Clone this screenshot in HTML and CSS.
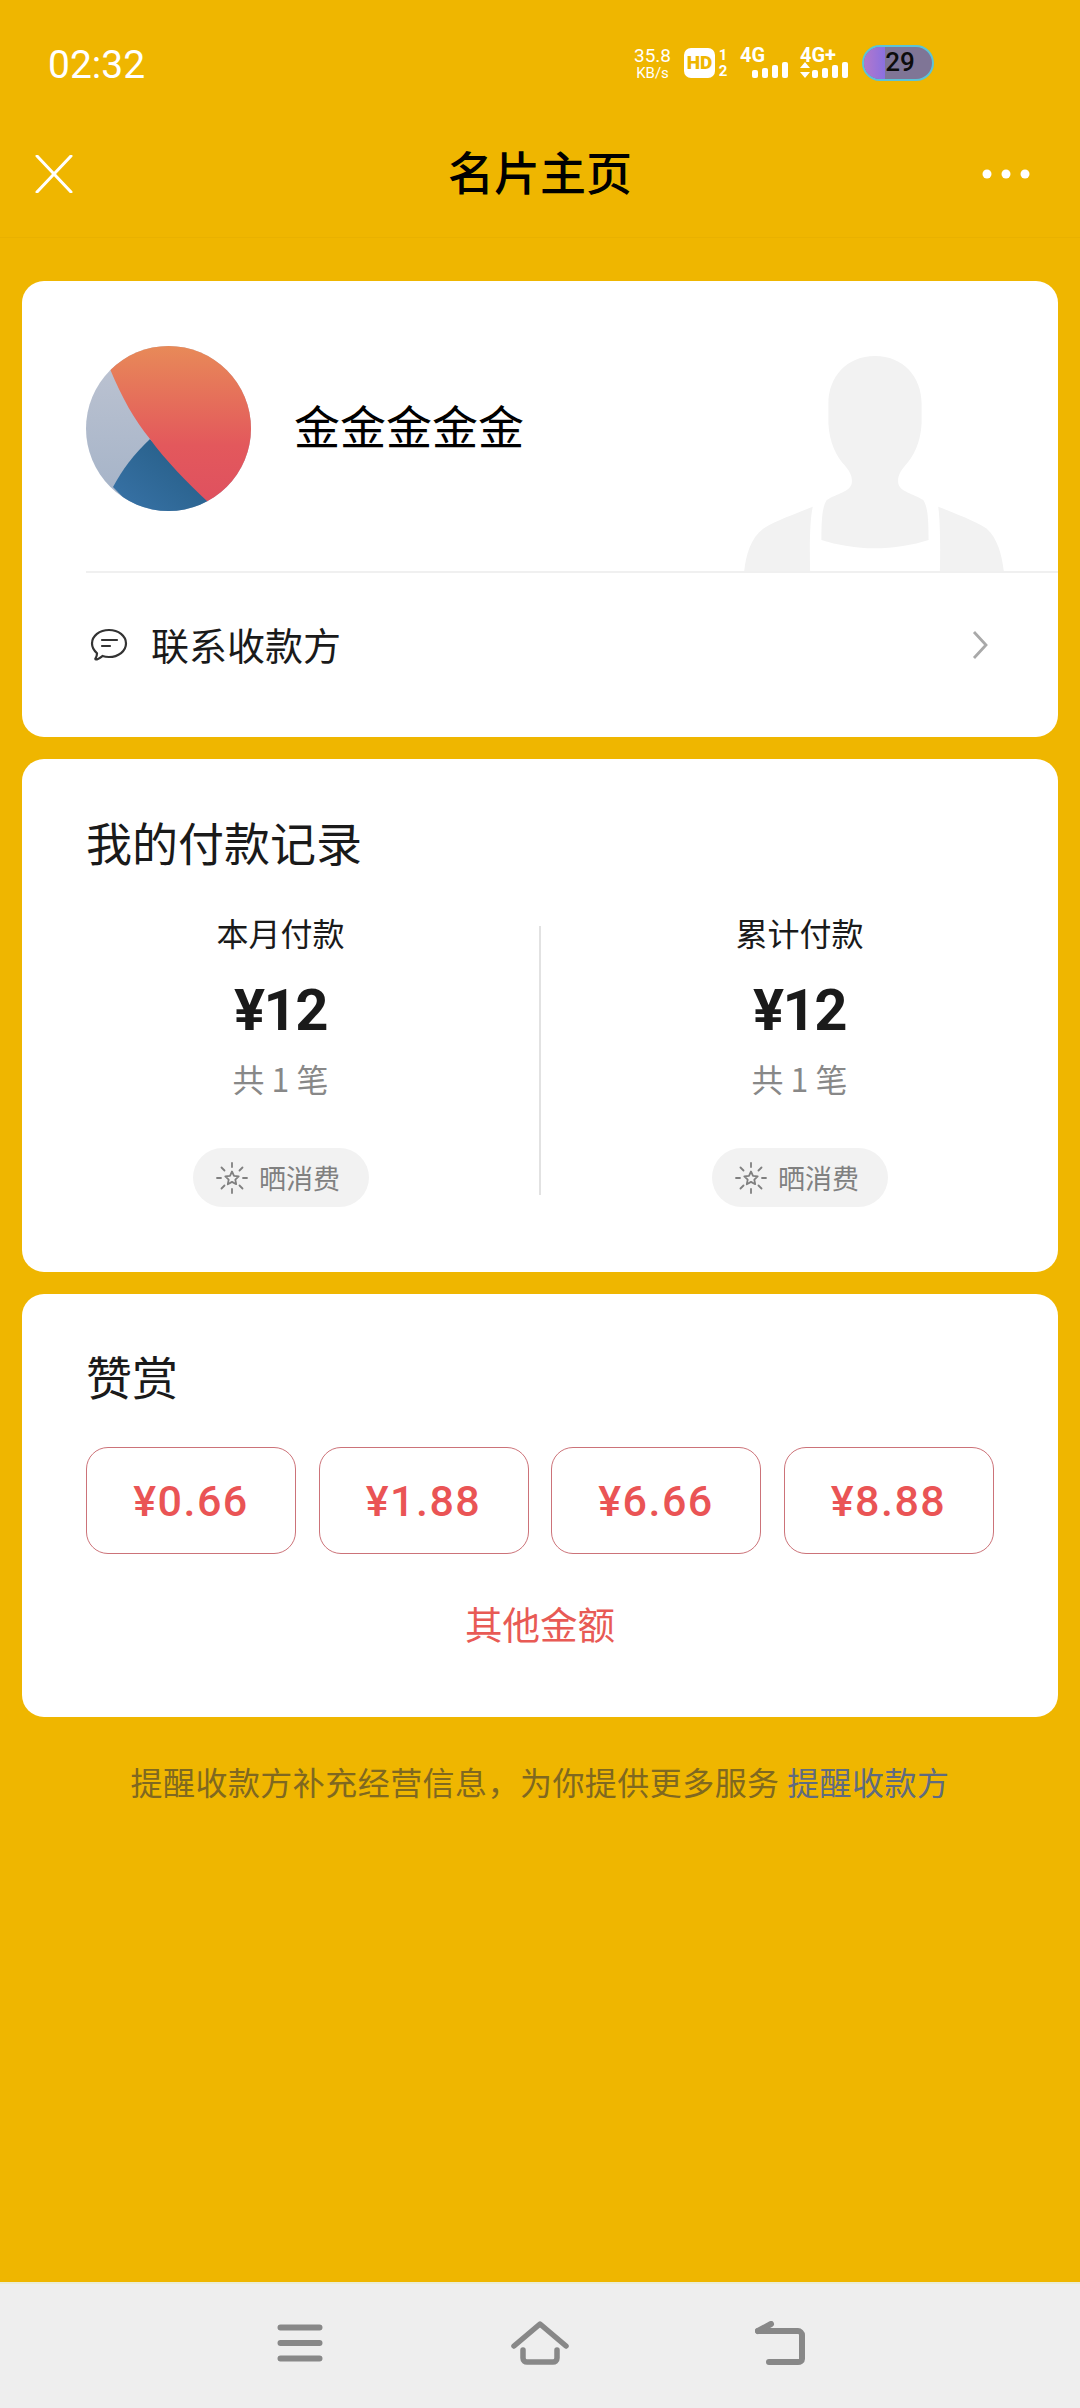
FILE: index.html
```html
<!DOCTYPE html>
<html lang="zh">
<head>
<meta charset="utf-8">
<title>名片主页</title>
<link rel="stylesheet" href="styles.css">
</head>
<body>
<div class="page">
  <header class="status">
    <span class="time">02:32</span>
    <div class="status-icons">
      <div class="speed"><span class="speed-num">35.8</span><span class="speed-unit">KB/s</span></div>
      <div class="hd">HD</div>
      <div class="sim"><span>1</span><span>2</span></div>
      <div class="net net-a">
        <span class="net-label">4G</span>
        <svg class="bars" width="36" height="16" viewBox="0 0 36 16"><g fill="#fff"><rect x="0" y="8" width="6" height="8" rx="2"/><rect x="10" y="6" width="6" height="10" rx="2"/><rect x="20" y="3" width="6" height="13" rx="2"/><rect x="30" y="0" width="6" height="16" rx="2"/></g></svg>
      </div>
      <div class="net net-b">
        <span class="net-label">4G+</span>
        <svg class="bars" width="48" height="16" viewBox="0 0 48 16"><g fill="#fff"><path d="M5 0l5 6H0zM5 16L0 10h10z"/><rect x="12" y="8" width="6" height="8" rx="2"/><rect x="22" y="6" width="6" height="10" rx="2"/><rect x="32" y="3" width="6" height="13" rx="2"/><rect x="42" y="0" width="6" height="16" rx="2"/></g></svg>
      </div>
      <div class="battery"><span class="battery-fill"></span><span class="battery-num">29</span></div>
    </div>
  </header>

  <nav class="navbar">
    <svg class="nav-close" width="38" height="38" viewBox="0 0 38 38"><path d="M2 1l34 36M36 1L2 37" stroke="#fff" stroke-width="3" fill="none" stroke-linecap="round"/></svg>
    <h1 class="nav-title">名片主页</h1>
    <svg class="nav-more" width="48" height="12" viewBox="0 0 48 12"><g fill="#fff"><circle cx="5" cy="6" r="4.5"/><circle cx="24" cy="6" r="4.5"/><circle cx="43" cy="6" r="4.5"/></g></svg>
  </nav>

  <main class="content">
    <section class="card card-profile">
      <div class="profile-head">
        <svg class="silhouette" width="260" height="215" viewBox="192 82 780 646">
          <path fill="#f2f2f2" d="M585 82C500 82 445 145 445 225V285C448 345 470 385 495 412C510 430 518 445 515 465C510 490 470 495 440 515C428 535 424 560 424 635C470 650 530 660 585 660C640 660 700 650 746 635C746 560 742 535 730 515C700 495 660 490 655 465C652 445 660 430 675 412C700 385 722 345 725 285V225C725 145 670 82 585 82Z"/>
          <path fill="#f2f2f2" d="M398 535C390 570 388 640 390 728H192C198 680 210 630 250 600C290 575 350 555 398 535ZM775 535C780 570 782 640 780 728H972C966 680 954 630 920 600C880 575 825 555 775 535Z"/>
        </svg>
        <svg class="avatar" width="165" height="165" viewBox="0 0 165 165">
          <defs>
            <clipPath id="av"><circle cx="82.5" cy="82.5" r="82.5"/></clipPath>
            <linearGradient id="av-gray" x1="0" y1="0" x2="0" y2="1"><stop offset="0" stop-color="#bec4d2"/><stop offset="1" stop-color="#a3b2c7"/></linearGradient>
            <linearGradient id="av-blue" x1="0" y1="1" x2="1" y2="0"><stop offset="0" stop-color="#3a75ab"/><stop offset="1" stop-color="#235a80"/></linearGradient>
            <linearGradient id="av-red" x1="0" y1="0" x2="0" y2="1"><stop offset="0" stop-color="#e88c58"/><stop offset="0.6" stop-color="#e3585c"/><stop offset="1" stop-color="#de4f60"/></linearGradient>
          </defs>
          <g clip-path="url(#av)">
            <rect width="165" height="165" fill="url(#av-gray)"/>
            <path d="M64 93C48 108 36 124 27 141L60 175 125 165 122 155z" fill="url(#av-blue)"/>
            <path d="M24 23C36 52 48 73 64 93C80 115 100 135 122 156L170 170V-5H20z" fill="url(#av-red)"/>
          </g>
        </svg>
        <span class="profile-name">金金金金金</span>
      </div>
      <div class="contact-row">
        <svg class="contact-icon" width="38" height="34" viewBox="0 0 38 34"><path d="M19 2c9.500 0 17 6 17 13.500S28.500 29 19 29c-2.500 0-4.500-.3-6.500-1-2 1.500-4.500 3.500-6.500 3.500-.8 0-.8-.8-.4-1.300.8-1.200 1.400-3 1.400-5C4 22.500 2 19 2 15.500 2 8 9.500 2 19 2z" fill="none" stroke="#333" stroke-width="2.200"/><path d="M12 12h15M12 18h8" stroke="#333" stroke-width="2.200" stroke-linecap="round"/></svg>
        <span class="contact-text">联系收款方</span>
        <svg class="chevron" width="16" height="30" viewBox="0 0 16 30"><path d="M2 2l12 13L2 28" fill="none" stroke="#a9a9a9" stroke-width="2.800"/></svg>
      </div>
    </section>

    <section class="card card-records">
      <h2 class="card-title">我的付款记录</h2>
      <div class="stats">
        <div class="stat">
          <div class="stat-label">本月付款</div>
          <div class="stat-amount">¥12</div>
          <div class="stat-count">共 1 笔</div>
          <div class="share-pill">
            <svg class="sun" width="32" height="32" viewBox="0 0 32 32"><g fill="none" stroke="#808080" stroke-width="1.800" stroke-linecap="round" stroke-linejoin="round"><path d="M16 9.500l2 4.300 4.700.6-3.400 3.200.9 4.600-4.200-2.300-4.200 2.300.9-4.600-3.400-3.200 4.700-.6z"/><path d="M16 1v4M16 27v4M1 16h4M27 16h4M5.500 5.500l3 3M23.500 23.500l3 3M26.500 5.500l-3 3M8.500 23.500l-3 3"/></g></svg>
            <span>晒消费</span>
          </div>
        </div>
        <div class="stats-divider"></div>
        <div class="stat">
          <div class="stat-label">累计付款</div>
          <div class="stat-amount">¥12</div>
          <div class="stat-count">共 1 笔</div>
          <div class="share-pill">
            <svg class="sun" width="32" height="32" viewBox="0 0 32 32"><g fill="none" stroke="#808080" stroke-width="1.800" stroke-linecap="round" stroke-linejoin="round"><path d="M16 9.500l2 4.300 4.700.6-3.400 3.200.9 4.600-4.200-2.300-4.200 2.300.9-4.600-3.400-3.200 4.700-.6z"/><path d="M16 1v4M16 27v4M1 16h4M27 16h4M5.500 5.500l3 3M23.500 23.500l3 3M26.500 5.500l-3 3M8.500 23.500l-3 3"/></g></svg>
            <span>晒消费</span>
          </div>
        </div>
      </div>
    </section>

    <section class="card card-reward">
      <h2 class="card-title">赞赏</h2>
      <div class="amounts">
        <div class="amount-btn">¥0.66</div>
        <div class="amount-btn">¥1.88</div>
        <div class="amount-btn">¥6.66</div>
        <div class="amount-btn">¥8.88</div>
      </div>
      <div class="other-amount">其他金额</div>
    </section>

    <p class="hint">提醒收款方补充经营信息，为你提供更多服务 <span class="hint-link">提醒收款方</span></p>
  </main>

  <footer class="sysnav">
    <div class="sysnav-item"><svg width="46" height="38" viewBox="0 0 46 38"><path d="M3.500 3.500h39M3.500 19h39M3.500 34.500h39" stroke="#888" stroke-width="6" stroke-linecap="round"/></svg></div>
    <div class="sysnav-item"><svg width="58" height="44" viewBox="0 0 58 44"><path d="M3 25L29 3l26 22" fill="none" stroke="#888" stroke-width="5.500" stroke-linecap="round" stroke-linejoin="round"/><path d="M12 29v8c0 3 2 4 4 4h26c2 0 4-1 4-4v-8" fill="none" stroke="#888" stroke-width="5.500" stroke-linecap="round"/></svg></div>
    <div class="sysnav-item"><svg width="50" height="44" viewBox="0 0 50 44"><path d="M3 10h40c2 0 4 2 4 4v24c0 2-2 3-4 3H14" fill="none" stroke="#888" stroke-width="6" stroke-linecap="round" stroke-linejoin="round"/><path d="M3 10l13-7" fill="none" stroke="#888" stroke-width="6" stroke-linecap="round"/></svg></div>
  </footer>
</div>
</body>
</html>
```

FILE: styles.css
```css
* { box-sizing: border-box; margin: 0; padding: 0; }

html, body { width: 1080px; height: 2408px; overflow: hidden; }

body {
  font-family: "Noto Sans CJK SC", "Noto Sans", sans-serif;
  background: #efb600;
  color: #1a1a1a;
}

.page { display: flex; flex-direction: column; height: 2408px; }

/* status bar */
.status {
  height: 116px;
  padding: 14px 146px 0 48px;
  display: flex;
  align-items: center;
  justify-content: space-between;
  color: #fff;
  font-family: Roboto, sans-serif;
}

.time { font-size: 39px; line-height: 44px; }

.status-icons { display: flex; align-items: center; margin-top: -5px; height: 36px; }

.speed { display: flex; flex-direction: column; align-items: center; width: 37px; line-height: 1; }
.speed-num { font-size: 19px; line-height: 20px; }
.speed-unit { font-size: 15px; line-height: 14px; }

.hd {
  width: 31px;
  height: 30px;
  margin-left: 13px;
  background: #fff;
  border-radius: 7px;
  color: #efb600;
  font-size: 19px;
  line-height: 30px;
  font-weight: 900;
  text-align: center;
}

.sim {
  display: flex;
  flex-direction: column;
  width: 10px;
  height: 30px;
  margin-left: 3px;
  justify-content: space-between;
  font-size: 15px;
  line-height: 14px;
  font-weight: 700;
  text-align: center;
}

.net { position: relative; height: 30px; }
.net-a { width: 48px; margin-left: 12px; }
.net-b { width: 48px; margin-left: 12px; }
.net-label { display: block; font-size: 20px; line-height: 15px; font-weight: 700; }
.bars { position: absolute; right: 0; bottom: 0; }

.battery {
  position: relative;
  width: 72px;
  height: 36px;
  margin-left: 14px;
  border: 2.5px solid #5cc3d6;
  border-radius: 18px;
  background: #7f7596;
  overflow: hidden;
  text-align: center;
}
.battery-fill { position: absolute; left: 0; top: 0; bottom: 0; width: 21px; background: linear-gradient(90deg, #b278cc, #8a70e0); }
.battery-num { position: relative; display: block; padding-left: 4px; font-size: 26px; line-height: 31px; font-weight: 500; color: #0c0c0c; }

/* navbar */
.navbar {
  height: 122px;
  padding: 0 50px 6px;
  display: grid;
  grid-template-columns: 1fr auto 1fr;
  align-items: center;
  border-bottom: 1px solid #e9b100;
}
.nav-title { margin-bottom: 7px; font-size: 46px; line-height: 60px; font-weight: 500; color: #000; }
.nav-close, .nav-more { display: block; }
.nav-close { margin-left: -15px; }
.nav-more { justify-self: end; }

/* content */
.content {
  flex: 1;
  padding: 43px 22px 0;
  display: flex;
  flex-direction: column;
  gap: 22px;
}

.card { background: #fff; border-radius: 22px; overflow: hidden; }

.card-profile { height: 456px; padding-left: 64px; }
.profile-head {
  position: relative;
  height: 292px;
  padding-top: 65px;
  display: flex;
  align-items: flex-start;
  border-bottom: 2px solid #f0f0f0;
}
.silhouette { position: absolute; right: 54px; bottom: 0; }
.avatar { position: relative; display: block; flex: none; }
.profile-name { position: relative; margin: 45px 0 0 43px; font-size: 46px; line-height: 66px; color: #000; }

.contact-row { height: 144px; padding: 0 70px 0 4px; display: flex; align-items: center; }
.contact-icon { flex: none; }
.contact-text { flex: 1; margin: 0 0 3px 23px; font-size: 38px; line-height: 50px; color: #1a1a1a; }

.card-records { height: 513px; padding-top: 52px; }
.card-title { margin-left: 64px; font-size: 46px; line-height: 60px; font-weight: 400; color: #1a1a1a; }

.stats { margin-top: 42px; display: grid; grid-template-columns: 1fr 2px 1fr; }
.stats-divider { height: 269px; align-self: center; background: #e2e2e2; }

.stat { display: flex; flex-direction: column; align-items: center; }
.stat-label { margin-top: -3px; font-size: 32px; line-height: 44px; color: #1a1a1a; }
.stat-amount { margin-top: 20px; font-family: Roboto, sans-serif; font-size: 58px; line-height: 72px; font-weight: 700; letter-spacing: -1.5px; color: #1a1a1a; }
.stat-count { margin-top: 10px; font-size: 32px; line-height: 44px; color: #888; }

.share-pill {
  margin-top: 48px;
  width: 176px;
  height: 59px;
  padding-right: 5px;
  border-radius: 30px;
  background: #f2f2f2;
  display: flex;
  align-items: center;
  justify-content: center;
  gap: 11px;
  font-size: 27px;
  color: #808080;
}

.card-reward { height: 423px; padding-top: 51px; }

.amounts { margin: 42px 0 0 64px; display: flex; gap: 22.5px; }
.amount-btn {
  width: 210px;
  height: 107px;
  border: 1.5px solid #cc7379;
  border-radius: 22px;
  display: flex;
  align-items: center;
  justify-content: center;
  font-family: Roboto, sans-serif;
  font-size: 43px;
  font-weight: 500;
  letter-spacing: 1.5px;
  color: #ea5455;
}

.other-amount { margin-top: 44px; font-size: 37.5px; line-height: 50px; text-align: center; color: #e85a55; }

.hint { margin-top: 20px; font-size: 32px; line-height: 44px; letter-spacing: 0.45px; text-align: center; color: #7f6820; }
.hint-link { color: #5f6b80; }

/* system nav */
.sysnav {
  height: 126px;
  padding-bottom: 6px;
  display: flex;
  align-items: center;
  justify-content: center;
  background: #eeeeee;
  border-top: 2px solid #e9ecd8;
}
.sysnav-item { width: 240px; display: flex; justify-content: center; }
```
